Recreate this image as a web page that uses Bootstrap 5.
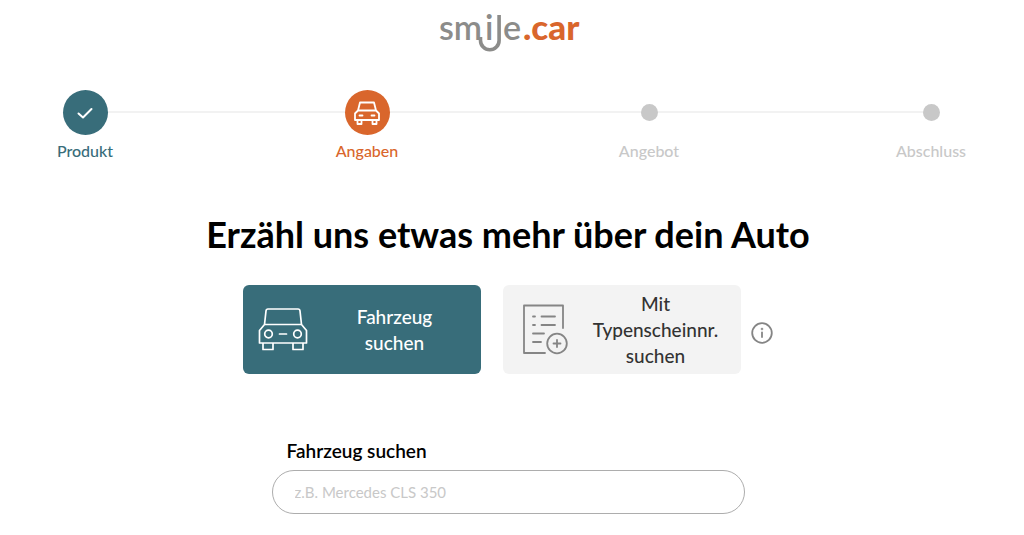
<!DOCTYPE html>
<html lang="de">
<head>
<meta charset="utf-8">
<meta name="viewport" content="width=device-width, initial-scale=1">
<title>smile.car – Angaben</title>
<link href="https://cdn.jsdelivr.net/npm/bootstrap@5.3.0/dist/css/bootstrap.min.css" rel="stylesheet">
<style>
  :root { --teal: #386d7a; --orange: #d9662c; --muted: #c8c8c8; }
  body { font-family: "Lato", "Liberation Sans", sans-serif; color: #000; background: #fff; }
  .page-header { padding-top: 4px; }
  .page-main { padding-right: 8px; }
  .stepper { margin: 30px 40px 0; }
  .stepper::before { content: ""; position: absolute; top: 21px; left: 45px; right: 45px; height: 2px; background: #f2f2f2; }
  .step { width: 90px; font-size: 16px; line-height: 24px; font-weight: 500; color: var(--muted); }
  .step-mark { height: 45px; margin-bottom: 4px; }
  .step-disc { width: 45px; height: 45px; color: #fff; }
  .step-dot { width: 17px; height: 17px; background: var(--muted); }
  .step-done { color: var(--teal); }
  .step-done .step-disc { background: var(--teal); }
  .step-now { color: var(--orange); }
  .step-now .step-disc { background: var(--orange); }
  .headline { font-size: 36px; line-height: 44px; font-weight: 700; margin: 49px 0 29px; }
  .choices { gap: 22px; }
  .choice { width: 238px; min-height: 89px; padding: 0 0 0 15px; border: 0; border-radius: 6px; font-size: 19px; line-height: 26px; font-weight: 500; background: #f3f3f3; color: #333; }
  .choice:hover { background: #eaeaea; }
  .choice-on, .choice-on:hover { background: var(--teal); color: #fff; }
  .info-wrap { margin-left: -12px; padding-top: 7px; }
  .info-btn { color: #858585; }
  .search { max-width: 473px; margin-top: 64px; }
  .search-label { font-size: 19px; line-height: 26px; font-weight: 600; margin: 0 0 6px 15px; }
  .search-input { height: 44px; padding: 0 22px; border: 1px solid #adadad; border-radius: 22px; font-size: 15px; }
  .search-input::placeholder { color: #c8c8c8; }
</style>
</head>
<body>
<header class="page-header text-center">
  <a href="#" class="d-inline-block" aria-label="smile.car">
    <svg class="d-block" width="146" height="50" viewBox="0 0 146 50" font-family="Lato, sans-serif" font-size="34">
      <g fill="#8c8c8a" font-weight="600">
        <text x="0" y="36">sm</text><text x="46" y="36">i</text><text x="64" y="36">e</text>
      </g>
      <path d="M41.500 33V36.500a9.300 9.300 0 0 0 18.600 0V11" fill="none" stroke="#8c8c8a" stroke-width="3.600"/>
      <text x="84" y="36" fill="#d9662c" font-size="35" font-weight="900">.car</text>
    </svg>
  </a>
</header>

<main class="page-main">
  <ol class="stepper list-unstyled d-flex justify-content-between position-relative text-center">
    <li class="step step-done">
      <div class="step-mark d-flex align-items-center justify-content-center position-relative">
        <span class="step-disc rounded-circle d-flex align-items-center justify-content-center">
          <svg width="18" height="14" viewBox="0 0 18 14" fill="none" stroke="currentColor" stroke-width="2" stroke-linecap="round" stroke-linejoin="round"><path d="M2.500 7.500 7 11.500 15.500 3"/></svg>
        </span>
      </div>
      Produkt
    </li>
    <li class="step step-now" aria-current="step">
      <div class="step-mark d-flex align-items-center justify-content-center position-relative">
        <span class="step-disc rounded-circle d-flex align-items-center justify-content-center">
          <svg width="28" height="26" viewBox="0 0 28 26" fill="none" stroke="currentColor" stroke-width="1.800" stroke-linejoin="round" stroke-linecap="round"><path d="M5 10.500 7 2.500h14L23 10.500M5 10.500h18l3 3v6.500H2v-6.500zM4.500 20v4h4v-4M19.500 20v4h4v-4M6.500 15.500h3M18.500 15.500h3"/></svg>
        </span>
      </div>
      Angaben
    </li>
    <li class="step">
      <div class="step-mark d-flex align-items-center justify-content-center position-relative"><span class="step-dot rounded-circle"></span></div>
      Angebot
    </li>
    <li class="step">
      <div class="step-mark d-flex align-items-center justify-content-center position-relative"><span class="step-dot rounded-circle"></span></div>
      Abschluss
    </li>
  </ol>

  <h1 class="headline text-center">Erzähl uns etwas mehr über dein Auto</h1>

  <div class="choices d-flex flex-wrap justify-content-center align-items-center">
    <button type="button" class="choice choice-on d-flex align-items-center" aria-pressed="true">
      <svg class="flex-shrink-0" width="50" height="46" viewBox="0 0 50 46" fill="none" stroke="currentColor" stroke-width="1.700" stroke-linejoin="round" stroke-linecap="round">
        <path d="M6.500 17.500 8 4q.2-2 2-2h30q1.800 0 2 2l1.500 13.500M6.500 17.500h37l5 6V36H1.500V23.500zM5 36v6.500h10V36M35 36v6.500h10V36M21.500 27h7"/>
        <circle cx="10.500" cy="27" r="3.800"/><circle cx="39.500" cy="27" r="3.800"/>
      </svg>
      <span class="flex-fill">Fahrzeug<br>suchen</span>
    </button>
    <button type="button" class="choice d-flex align-items-center" aria-pressed="false">
      <svg class="flex-shrink-0" width="52" height="52" viewBox="0 0 52 52" fill="none" stroke="#858585" stroke-width="1.800" stroke-linecap="round" stroke-linejoin="round">
        <path d="M27 49H6V1.500h39V24M15 12.500h2M23.500 12.500H37M15 21h2M23.500 21H37M15 29.500h11M15 38h8M39 36v7M35.500 39.500h7"/>
        <circle cx="39" cy="39.500" r="9.800"/>
      </svg>
      <span class="flex-fill">Mit<br>Typenscheinnr.<br>suchen</span>
    </button>
    <div class="info-wrap">
      <button type="button" class="info-btn btn p-0 border-0 d-block" aria-label="Information">
        <svg class="d-block" width="22" height="22" viewBox="0 0 22 22" fill="none" stroke="currentColor" stroke-width="1.800" stroke-linecap="round"><circle cx="11" cy="11" r="9.800"/><path d="M11 10.500v4.500"/><circle cx="11" cy="7" r=".4"/></svg>
      </button>
    </div>
  </div>

  <form class="search mx-auto">
    <label class="search-label d-block" for="vehicle">Fahrzeug suchen</label>
    <input class="search-input form-control" id="vehicle" type="text" placeholder="z.B. Mercedes CLS 350">
  </form>
</main>
<script src="https://cdn.jsdelivr.net/npm/bootstrap@5.3.0/dist/js/bootstrap.bundle.min.js"></script>
</body>
</html>
